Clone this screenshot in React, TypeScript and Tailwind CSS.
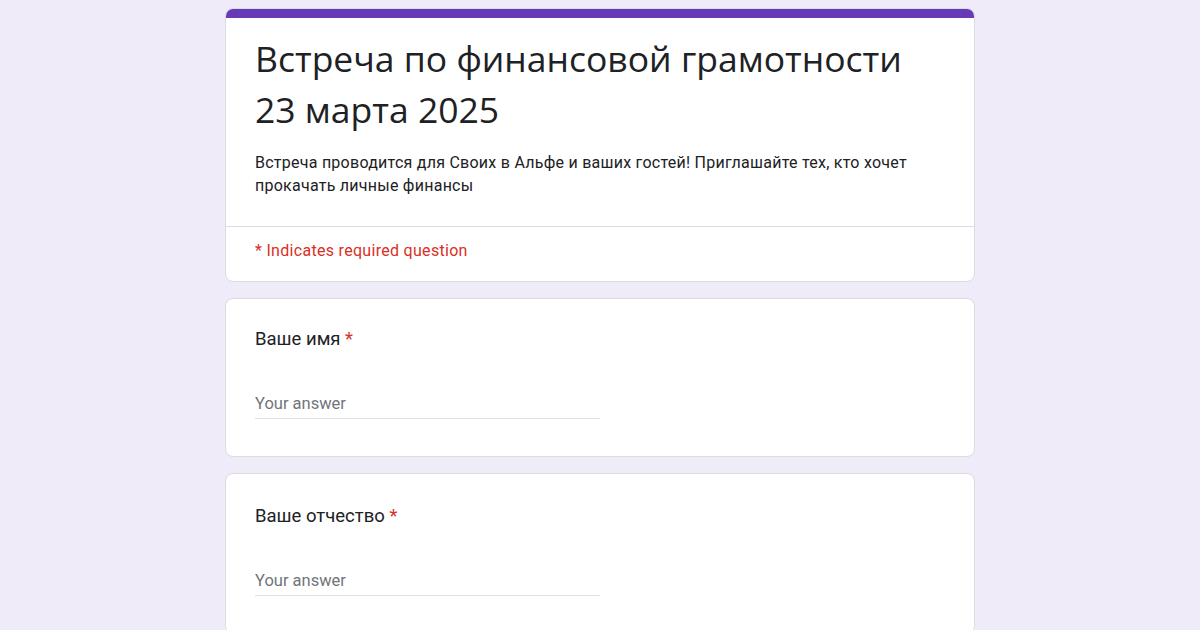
import React from "react";

function Question({ label, pt, pb }: { label: string; pt: string; pb: string }) {
  return (
    <div className={`bg-white rounded-lg border border-[#dadce0] px-[29px] ${pt} ${pb}`}>
      <div className="text-[18.5px] leading-[24px] text-[#202124]">
        {label}
        <span className="text-[#d93025]"> *</span>
      </div>
      <div className="mt-[43px] w-[345px] border-b border-[#e0e0e0] pb-[4px] text-[16.5px] leading-[20px] text-[#70757a]">
        Your answer
      </div>
    </div>
  );
}

export default function App() {
  return (
    <div
      className="min-h-[630px] bg-[#f0ebf8] pt-[8px]"
      style={{ fontFamily: "Roboto, 'Liberation Sans', sans-serif" }}
    >
      <div className="mx-auto w-[750px] flex flex-col gap-[16px]">
        <div className="bg-white rounded-lg border border-[#dadce0] overflow-hidden">
          <div className="h-[10px] bg-[#673ab7] -mx-px -mt-px" />
          <div className="px-[29px] pt-[15px] pb-[29px] border-b border-[#dadce0]">
            <div
              className="text-[35.5px] leading-[51px] text-[#202124]"
              style={{ fontFamily: "'Open Sans', Roboto, sans-serif" }}
            >
              Встреча по финансовой грамотности
              <br />
              23 марта 2025
            </div>
            <div className="mt-[16px] text-[16px] leading-[23px] tracking-[0.25px] text-[#202124]">
              Встреча проводится для Своих в Альфе и ваших гостей! Приглашайте тех, кто хочет
              <br />
              прокачать личные финансы
            </div>
          </div>
          <div className="px-[29px] pt-[14px] pb-[20px] text-[16px] leading-[20px] tracking-[0.3px] text-[#d93025]">
            * Indicates required question
          </div>
        </div>
        <Question label="Ваше имя" pt="pt-[28px]" pb="pb-[37px]" />
        <Question label="Ваше отчество" pt="pt-[30px]" pb="pb-[37px]" />
      </div>
    </div>
  );
}
